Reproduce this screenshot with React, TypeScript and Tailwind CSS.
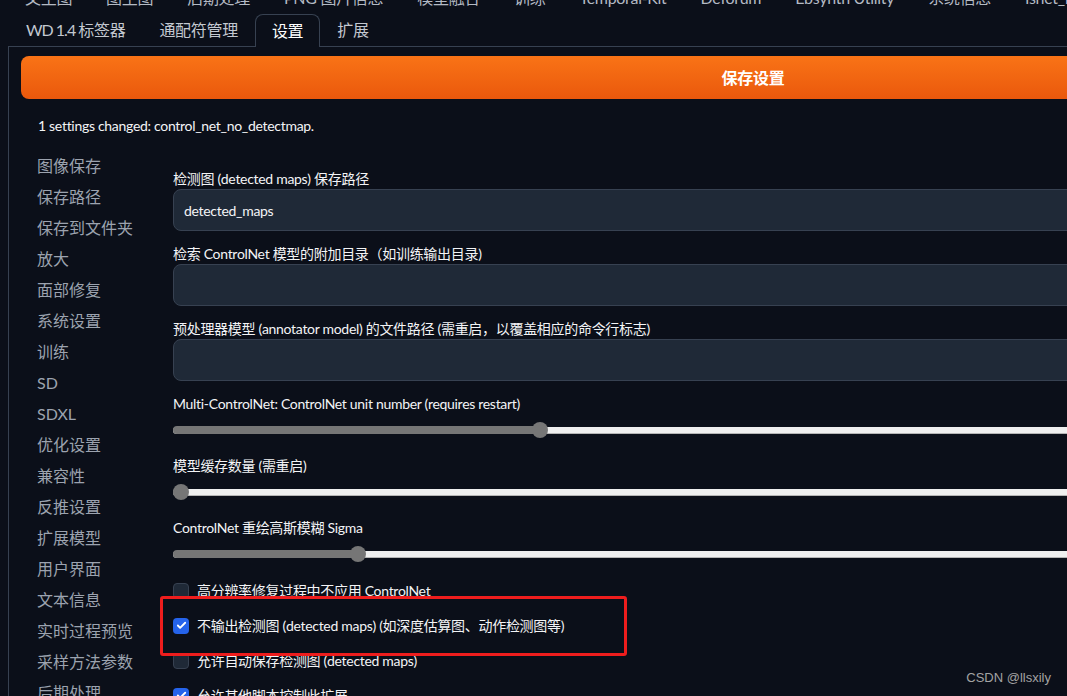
import { Check } from 'lucide-react'

const topTabs = ['文生图', '图生图', '后期处理', 'PNG 图片信息', '模型融合', '训练', 'Temporal-Kit', 'Deforum', 'Ebsynth Utility', '系统信息', 'Isnet_Pro']

const navItems = [
  '图像保存', '保存路径', '保存到文件夹', '放大', '面部修复', '系统设置', '训练', 'SD', 'SDXL',
  '优化设置', '兼容性', '反推设置', '扩展模型', '用户界面', '文本信息', '实时过程预览', '采样方法参数', '后期处理',
]

function TextField({ label, value }: { label: string; value?: string }) {
  return (
    <div className="flex flex-col">
      <div className="h-[20px] text-[14px] leading-[20px] text-[#f3f4f6]">{label}</div>
      <div className="flex h-[42px] items-center rounded-[8px] border border-[#374151] bg-[#1f2937] px-[10px] text-[14px] text-[#f3f4f6]">
        {value}
      </div>
    </div>
  )
}

function Slider({ label, pct }: { label: string; pct: number }) {
  return (
    <div className="flex flex-col">
      <div className="h-[20px] text-[14px] leading-[20px] text-[#f3f4f6]">{label}</div>
      <div className="relative flex h-[32px] items-center">
        <div className="h-[7px] w-full rounded-full border-b border-[#b5b5b5] bg-[#efefef]" />
        <div
          className="absolute left-0 top-1/2 h-[8px] -translate-y-1/2 rounded-full bg-[#767676]"
          style={{ width: `calc(${pct}% + 8px)` }}
        />
        {/* thumb */}
        <div
          className="absolute top-1/2 h-[16px] w-[16px] -translate-y-1/2 rounded-full bg-[#767676]"
          style={{ left: `${pct}%` }}
        />
      </div>
    </div>
  )
}

function CheckRow({ label, checked }: { label: string; checked?: boolean }) {
  return (
    <div className="flex h-[35px] items-center gap-[8px]">
      {checked ? (
        <div className="flex h-[16px] w-[16px] items-center justify-center rounded-[4px] bg-[#2563eb]">
          <Check className="h-[11px] w-[11px] text-white" strokeWidth={4} />
        </div>
      ) : (
        <div className="h-[16px] w-[16px] rounded-[4px] border border-[#374151] bg-[#1f2937]" />
      )}
      <span className="text-[14px] text-[#f3f4f6]">{label}</span>
    </div>
  )
}

export default function App() {
  return (
    <div
      className="relative h-[696px] w-full overflow-hidden bg-[#0b0f19] tracking-[-0.3px]"
      style={{ fontFamily: 'Lato, "Noto Sans CJK SC", sans-serif' }}
    >
      <div className="-mt-[18px] w-[1500px]">
        {/* tabs, first row is cut off at the top */}
        <div className="flex h-[32px] items-center pl-[8px] text-[16px] text-[#b4bac4]">
          {topTabs.map((t) => (
            <div key={t} className="whitespace-nowrap px-[17px]">{t}</div>
          ))}
        </div>
        <div className="flex h-[32px] items-end pl-[9px] text-[16px] text-[#c3c8d0]">
          <div className="flex h-full items-center whitespace-pre px-[17px]">
            <span className="tracking-[-1px]">WD 1.4 </span>标签器
          </div>
          <div className="flex h-full items-center px-[17px]">通配符管理</div>
          <div className="relative z-10 -mb-px flex h-[33px] items-center rounded-t-[8px] border border-b-0 border-[#374151] bg-[#0b0f19] px-[16px] pb-px text-white">
            设置
          </div>
          <div className="flex h-full items-center px-[17px]">扩展</div>
        </div>

        {/* panel */}
        <div className="ml-[8px] border-l border-t border-[#374151] pl-[12px] pt-[9px]">
          <button className="flex h-[43px] w-[1464px] items-center justify-center rounded-[8px] bg-gradient-to-b from-[#f97316] to-[#ea580c] text-[16px] font-bold text-white">
            保存设置
          </button>

          <div className="mt-[17px] pl-[17px] text-[14px] leading-[20px] text-[#f3f4f6]">
            1 settings changed: control_net_no_detectmap.
          </div>

          <div className="mt-[14px] flex">
            <div className="flex w-[152px] flex-col pl-[16px] text-[16px] tracking-normal text-[#9ca3af]">
              {navItems.map((n, i) => (
                <div key={i} className="flex h-[31px] items-center whitespace-nowrap">{n}</div>
              ))}
            </div>

            <div className="mt-[19px] flex w-[1312px] flex-col">
              <div className="flex flex-col gap-[13px]">
                <TextField label="检测图 (detected maps) 保存路径" value="detected_maps" />
                <TextField label="检索 ControlNet 模型的附加目录（如训练输出目录)" />
                <TextField label="预处理器模型 (annotator model) 的文件路径 (需重启，以覆盖相应的命令行标志)" />
                <Slider label="Multi-ControlNet: ControlNet unit number (requires restart)" pct={27.4} />
              </div>
              <div className="mt-[10px] flex flex-col gap-[10px]">
                <Slider label="模型缓存数量 (需重启)" pct={0} />
                <Slider label="ControlNet 重绘高斯模糊 Sigma" pct={13.5} />
              </div>

              <div className="relative mt-[3px] flex flex-col">
                <CheckRow label="高分辨率修复过程中不应用 ControlNet" />
                <CheckRow label="不输出检测图 (detected maps) (如深度估算图、动作检测图等)" checked />
                <CheckRow label="允许自动保存检测图 (detected maps)" />
                <CheckRow label="允许其他脚本控制此扩展" checked />
                {/* red annotation box */}
                <div className="absolute left-[-13px] top-[23px] h-[60px] w-[467px] rounded-[3px] border-[3px] border-[#ee1d1d]" />
              </div>
            </div>
          </div>
        </div>
      </div>

      <div
        className="absolute bottom-[9px] right-[16px] text-[13px] tracking-normal text-[#a3a3a3]"
        style={{ fontFamily: '"Liberation Sans", sans-serif' }}
      >
        CSDN @llsxily
      </div>
    </div>
  )
}
